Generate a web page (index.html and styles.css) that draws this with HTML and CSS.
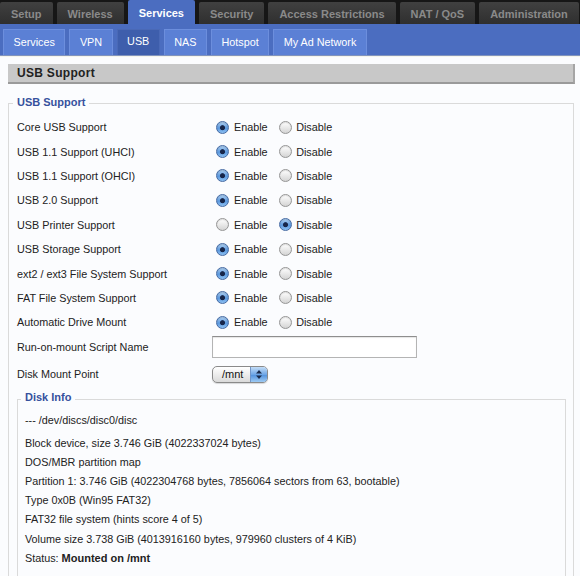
FILE: index.html
```html
<!DOCTYPE html>
<html>
<head>
<meta charset="utf-8">
<title>USB Support</title>
<link rel="stylesheet" href="styles.css">
</head>
<body>
<div class="topnav">
  <div class="tab">Setup</div>
  <div class="tab">Wireless</div>
  <div class="tab active">Services</div>
  <div class="tab">Security</div>
  <div class="tab">Access Restrictions</div>
  <div class="tab">NAT / QoS</div>
  <div class="tab">Administration</div>
</div>
<div class="subnav">
  <div class="subtab">Services</div>
  <div class="subtab">VPN</div>
  <div class="subtab current">USB</div>
  <div class="subtab">NAS</div>
  <div class="subtab">Hotspot</div>
  <div class="subtab">My Ad Network</div>
</div>
<div class="main">
  <div class="section-title">USB Support</div>
  <fieldset class="group">
    <legend>USB Support</legend>
    <div class="row"><span class="label">Core USB Support</span><span class="opts"><input type="radio" class="radio first" name="r1" checked><span class="opt">Enable</span><input type="radio" class="radio second" name="r1"><span class="opt">Disable</span></span></div>
    <div class="row"><span class="label">USB 1.1 Support (UHCI)</span><span class="opts"><input type="radio" class="radio first" name="r2" checked><span class="opt">Enable</span><input type="radio" class="radio second" name="r2"><span class="opt">Disable</span></span></div>
    <div class="row"><span class="label">USB 1.1 Support (OHCI)</span><span class="opts"><input type="radio" class="radio first" name="r3" checked><span class="opt">Enable</span><input type="radio" class="radio second" name="r3"><span class="opt">Disable</span></span></div>
    <div class="row"><span class="label">USB 2.0 Support</span><span class="opts"><input type="radio" class="radio first" name="r4" checked><span class="opt">Enable</span><input type="radio" class="radio second" name="r4"><span class="opt">Disable</span></span></div>
    <div class="row"><span class="label">USB Printer Support</span><span class="opts"><input type="radio" class="radio first" name="r5"><span class="opt">Enable</span><input type="radio" class="radio second" name="r5" checked><span class="opt">Disable</span></span></div>
    <div class="row"><span class="label">USB Storage Support</span><span class="opts"><input type="radio" class="radio first" name="r6" checked><span class="opt">Enable</span><input type="radio" class="radio second" name="r6"><span class="opt">Disable</span></span></div>
    <div class="row"><span class="label">ext2 / ext3 File System Support</span><span class="opts"><input type="radio" class="radio first" name="r7" checked><span class="opt">Enable</span><input type="radio" class="radio second" name="r7"><span class="opt">Disable</span></span></div>
    <div class="row"><span class="label">FAT File System Support</span><span class="opts"><input type="radio" class="radio first" name="r8" checked><span class="opt">Enable</span><input type="radio" class="radio second" name="r8"><span class="opt">Disable</span></span></div>
    <div class="row"><span class="label">Automatic Drive Mount</span><span class="opts"><input type="radio" class="radio first" name="r9" checked><span class="opt">Enable</span><input type="radio" class="radio second" name="r9"><span class="opt">Disable</span></span></div>
    <div class="row"><span class="label">Run-on-mount Script Name</span><input type="text" class="textbox"></div>
    <div class="row row-select"><span class="label">Disk Mount Point</span><div class="select"><span class="val">/mnt</span><span class="arrows"><svg width="8" height="11" viewBox="0 0 8 11"><path d="M4 1 L7 4.5 L1 4.5 Z M1 6.5 L7 6.5 L4 10 Z" fill="#1c2c4c"/></svg></span></div></div>
    <fieldset class="diskinfo">
      <legend>Disk Info</legend>
      <div class="line first-line">--- /dev/discs/disc0/disc</div>
      <div class="line">Block device, size 3.746 GiB (4022337024 bytes)</div>
      <div class="line">DOS/MBR partition map</div>
      <div class="line">Partition 1: 3.746 GiB (4022304768 bytes, 7856064 sectors from 63, bootable)</div>
      <div class="line">Type 0x0B (Win95 FAT32)</div>
      <div class="line">FAT32 file system (hints score 4 of 5)</div>
      <div class="line">Volume size 3.738 GiB (4013916160 bytes, 979960 clusters of 4 KiB)</div>
      <div class="line">Status: <b>Mounted on /mnt</b></div>
    </fieldset>
  </fieldset>
</div>
</body>
</html>
```
FILE: styles.css
```css
html, body {
  margin: 0;
  padding: 0;
}
body {
  background: #fbfcfe;
  font-family: "Liberation Sans", Arial, sans-serif;
  font-size: 10.8px;
  color: #222;
  overflow: hidden;
}
.topnav {
  display: flex;
  gap: 4px;
  height: 24px;
  background: #161616;
}
.tab {
  margin-top: 2px;
  height: 22px;
  line-height: 25px;
  padding: 0 11px;
  background: linear-gradient(#404040, #2f2f2f);
  color: #8a8a8a;
  font-weight: bold;
  font-size: 11px;
  white-space: nowrap;
  border-radius: 2px 2px 0 0;
}
.tab.active {
  margin-top: 0;
  height: 24px;
  line-height: 27px;
  background: #4b6dc0;
  color: #fff;
}
.subnav {
  display: flex;
  align-items: flex-end;
  gap: 4px;
  height: 31px;
  padding-left: 3px;
  background: #4b6dc0;
  border-bottom: 1px solid #8193bd;
}
.subtab {
  height: 25px;
  line-height: 25px;
  padding: 0 9.5px;
  background: #5b80d5;
  border: 1px solid #6c8edd;
  border-bottom: none;
  color: #fff;
  white-space: nowrap;
}
.subtab.current {
  background: #3e5eac;
  border-color: #4a69b6;
  line-height: 22px;
}
.main {
  padding-top: 7px;
  border-top: 1px solid #f4f4ea;
}
.section-title {
  margin: 0 5px 0 8px;
  height: 18px;
  line-height: 19px;
  padding-left: 9px;
  background: #c8c8c8;
  border-bottom: 2px solid #9a9a9a;
  border-right: 2px solid #a5a5a5;
  font-weight: bold;
  font-size: 12px;
  letter-spacing: 0.3px;
  color: #222;
}
fieldset {
  border: 1px solid #dadada;
  min-width: 0;
}
legend {
  font-weight: bold;
  font-size: 11px;
  color: #36519d;
  line-height: 14px;
}
.group {
  margin: 11px 6px 0 8px;
  padding: 3px 4px 0 4px;
}
.group > legend {
  padding: 0 4px 3px;
}
.row {
  display: flex;
  align-items: center;
  height: 24.4px;
  padding-left: 4px;
}
.row-select {
  height: 29.4px;
}
.label {
  width: 195px;
  flex: none;
}
.opts {
  display: flex;
  align-items: center;
}
.radio {
  appearance: none;
  -webkit-appearance: none;
  width: 13px;
  height: 13px;
  border-radius: 50%;
  border: 1px solid #959595;
  background: linear-gradient(#ffffff, #d4d4d4);
  box-shadow: inset 0 1px 1px rgba(0,0,0,0.12);
  margin: 0;
  box-sizing: border-box;
  flex: none;
}
.radio:checked {
  border-color: #456aa3;
  background:
    radial-gradient(circle at 50% 52%, #17264a 0, #17264a 2.1px, rgba(23,38,74,0) 2.9px),
    linear-gradient(#b3d4f5, #5a97dd 55%, #8cc0f2);
}
.radio.first {
  margin: 0 5.5px 0 3.5px;
}
.radio.second {
  margin: 0 4px 0 11.5px;
}
.textbox {
  width: 205px;
  height: 22px;
  box-sizing: border-box;
  border: 1px solid #b4b4b4;
  border-top-color: #8e8e8e;
  box-shadow: inset 0 1px 1px rgba(0,0,0,0.1);
  background: #fff;
  margin: 0;
  padding: 0 3px;
}
.select {
  display: flex;
  width: 56px;
  height: 17px;
  box-sizing: border-box;
  border: 1px solid #8a8a8a;
  border-radius: 5px;
  overflow: hidden;
  background: linear-gradient(#ffffff, #dadada);
  box-shadow: 0 1px 1px rgba(0,0,0,0.15);
  margin-top: 1px;
}
.select .val {
  flex: 1;
  padding-left: 9px;
  line-height: 15px;
  font-size: 11px;
  color: #111;
}
.select .arrows {
  width: 16px;
  display: flex;
  align-items: center;
  justify-content: center;
  border-left: 1px solid #7195c7;
  background: linear-gradient(#c4ddf7, #6ea6e6 50%, #4f8fdc 51%, #9dcaf3);
}
.diskinfo {
  margin: 3px 3px 0 4px;
  padding: 4px 3px 20px 3px;
}
.diskinfo > legend {
  padding: 0 4px 3px;
  line-height: 13px;
}
.line {
  line-height: 19.2px;
  padding-left: 4px;
  white-space: nowrap;
}
.first-line {
  margin-bottom: 3px;
}
.line b {
  font-size: 11px;
}
```
